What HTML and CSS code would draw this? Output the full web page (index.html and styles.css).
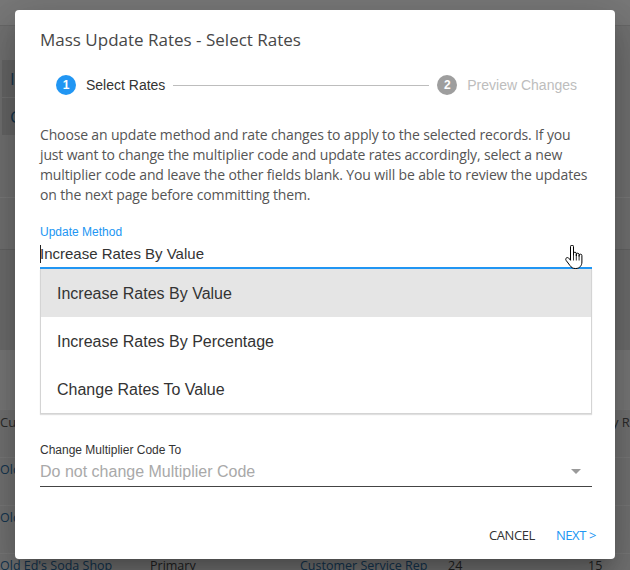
FILE: index.html
```html
<!DOCTYPE html>
<html>
<head>
<meta charset="utf-8">
<link rel="stylesheet" href="styles.css">
</head>
<body>
<div class="page">
  <div class="topbar"></div>
  <div class="toolbar">
    <div class="tool">Is</div>
    <div class="tool">C</div>
  </div>
  <div class="filters"></div>
  <div class="panel"></div>
  <div class="band"></div>
  <div class="table">
    <div class="trow thead"><span class="c1">Customer</span><span class="c2">Type</span><span class="c3">Role</span><span class="c4">Qty</span><span class="c5">Hourly Rate</span></div>
    <div class="trow"><span class="c1 link">Old Ed's Soda Shop</span><span class="c2">Primary</span><span class="c3 link">Customer Service Rep</span><span class="c4">24</span><span class="c5">15</span></div>
    <div class="trow"><span class="c1 link">Old Ed's Soda Shop</span><span class="c2">Primary</span><span class="c3 link">Customer Service Rep</span><span class="c4">24</span><span class="c5">15</span></div>
    <div class="trow"><span class="c1 link">Old Ed's Soda Shop</span><span class="c2">Primary</span><span class="c3 link">Customer Service Rep</span><span class="c4">24</span><span class="c5">15</span></div>
  </div>
</div>
<div class="backdrop"></div>
<div class="dialog">
  <h2 class="title">Mass Update Rates - Select Rates</h2>
  <div class="stepper">
    <div class="step active"><span class="step-icon">1</span><span class="step-label">Select Rates</span></div>
    <div class="connector"></div>
    <div class="step"><span class="step-icon">2</span><span class="step-label">Preview Changes</span></div>
  </div>
  <p class="intro">Choose an update method and rate changes to apply to the selected records. If you just want to change the multiplier code and update rates accordingly, select a new multiplier code and leave the other fields blank. You will be able to review the updates on the next page before committing them.</p>
  <div class="field">
    <label class="field-label focused">Update Method</label>
    <div class="input focused"><span class="caret"></span>Increase Rates By Value</div>
    <ul class="menu">
      <li class="menu-item selected">Increase Rates By Value</li>
      <li class="menu-item">Increase Rates By Percentage</li>
      <li class="menu-item">Change Rates To Value</li>
    </ul>
  </div>
  <div class="field field-2">
    <label class="field-label">Change Multiplier Code To</label>
    <div class="input select"><span class="placeholder">Do not change Multiplier Code</span><span class="arrow"></span></div>
  </div>
  <div class="actions">
    <button class="btn">CANCEL</button>
    <button class="btn primary">NEXT &gt;</button>
  </div>
</div>
<svg class="cursor" width="20" height="26" viewBox="0 0 20 26">
  <path d="M6.5 1.6a1.5 1.5 0 0 1 3 0V10.5V8.6a1.4 1.4 0 0 1 2.8 0V11V9.6a1.4 1.4 0 0 1 2.8 0V11.5V10.6a1.4 1.4 0 0 1 2.8 0V17c0 3.6-2.4 6.5-6 6.5H11.2c-2.4 0-3.9-1.1-5.2-2.9L2.1 15.4c-0.7-1-0.4-2.1 0.5-2.6 0.9-0.5 1.900-0.1 2.5 0.7L6.5 15.3Z" fill="#fff" stroke="#000" stroke-width="1" stroke-linejoin="round"/>
  <path d="M9.5 10.5V15.5M12.3 11V15.5M15.1 11.5V15.5" stroke="#000" stroke-width="0.8" fill="none"/>
</svg>
</body>
</html>
```

FILE: styles.css
```css
* { box-sizing: border-box; }
html, body { margin: 0; padding: 0; }
body {
  width: 630px;
  height: 570px;
  overflow: hidden;
  position: relative;
  font-family: "Open Sans", sans-serif;
}

/* underlying page */
.page {
  width: 630px;
  height: 570px;
  overflow: hidden;
  display: flex;
  flex-direction: column;
  background: #e2e2e2;
}
.topbar {
  height: 26px;
  flex: none;
  background: #f0f0f0;
  border-bottom: 1px solid #d0d0d0;
}
.toolbar {
  height: 171px;
  flex: none;
  padding: 34px 0 0 2px;
  display: flex;
  flex-direction: column;
  gap: 1px;
}
.tool {
  width: 80px;
  height: 37px;
  background: #cdcdcd;
  color: #2f6a9a;
  padding-left: 8px;
  line-height: 37px;
  font-size: 17px;
}
.filters {
  height: 53px;
  flex: none;
  border-top: 1px solid #f4f4f4;
  border-bottom: 1px solid #c8c8c8;
}
.panel {
  height: 100px;
  flex: none;
  background: #dadada;
}
.band {
  height: 59px;
  flex: none;
  background: #f0f0f0;
}
.table {
  flex: 1;
  background: #e4e4e4;
}
.trow {
  height: 48px;
  border-top: 1px solid #f2f2f2;
  display: grid;
  grid-template-columns: 150px 150px 148px 150px 32px;
  align-items: start;
  padding-top: 2px;
  font-size: 12.5px;
  line-height: 20px;
  color: #444;
  white-space: nowrap;
  overflow: hidden;
}
.thead { padding-top: 2px; color: #555; font-size: 13px; }
.trow .c5 { text-indent: -10px; }
.thead .c5 { text-indent: -20px; }
.link { color: #2a6aa0; }

.backdrop {
  position: absolute;
  inset: 0;
  background: rgba(0, 0, 0, 0.5);
}

/* dialog */
.dialog {
  position: absolute;
  left: 15px;
  top: 10px;
  width: 600px;
  height: 549px;
  background: #fff;
  border-radius: 4px;
  padding: 18px 23px 0 25px;
  box-shadow: 0 11px 15px -7px rgba(0,0,0,.2), 0 24px 38px 3px rgba(0,0,0,.14), 0 9px 46px 8px rgba(0,0,0,.12);
  display: flex;
  flex-direction: column;
}
.title {
  margin: 0;
  font-family: "Open Sans", sans-serif;
  font-weight: 400;
  font-size: 17px;
  line-height: 24px;
  color: #474747;
}
.stepper {
  margin: 23px 7px 0 8px;
  height: 20px;
  display: flex;
  align-items: center;
  font-family: "Liberation Sans", Arial, sans-serif;
  font-size: 14px;
}
.step {
  display: flex;
  align-items: center;
  padding: 0 8px;
  color: #bdbdbd;
}
.step.active { color: #333; }
.step-icon {
  width: 20px;
  height: 20px;
  border-radius: 50%;
  background: #9e9e9e;
  color: #fff;
  font-size: 12px;
  font-weight: bold;
  line-height: 20px;
  text-align: center;
  margin-right: 10px;
}
.step.active .step-icon { background: #2196f3; }
.step-label { line-height: 20px; }
.connector {
  flex: 1;
  height: 1px;
  background: #bdbdbd;
}
.intro {
  margin: 30px 0 0;
  font-size: 14px;
  line-height: 20px;
  letter-spacing: -0.15px;
  color: #555;
}
.field {
  margin-top: 20px;
  display: flex;
  flex-direction: column;
  font-family: "Liberation Sans", Arial, sans-serif;
}
.field-2 { margin-top: 29px; }
.field-label {
  font-size: 12px;
  line-height: 14px;
  color: #333;
}
.field-label.focused { color: #2196f3; }
.input {
  margin-top: 5px;
  font-size: 16px;
  line-height: 19px;
  color: #333;
  padding-bottom: 5px;
  border-bottom: 1px solid #444;
  display: flex;
  align-items: center;
}
.input.focused {
  font-size: 15px;
  padding-bottom: 4px;
  border-bottom: 2px solid #2196f3;
}
.caret {
  width: 1px;
  height: 18px;
  background: #222;
  margin-right: -1px;
}
.placeholder { color: #a9a9a9; flex: 1; }
.arrow {
  width: 0;
  height: 0;
  border-left: 5px solid transparent;
  border-right: 5px solid transparent;
  border-top: 5px solid #9a9a9a;
  margin-right: 11px;
}
.menu {
  list-style: none;
  margin: 0;
  padding: 0;
  border: 1px solid #d4d4d4;
  border-top: none;
  box-shadow: 0 1px 1px rgba(0,0,0,.12);
}
.menu-item {
  height: 48px;
  line-height: 49px;
  padding-left: 16px;
  font-size: 16px;
  color: #333;
}
.menu-item.selected { background: #e5e5e5; }
.actions {
  margin: 39px -4px 0 0;
  display: flex;
  justify-content: flex-end;
  gap: 21px;
}
.btn {
  border: none;
  background: none;
  padding: 0;
  font-family: "Open Sans", sans-serif;
  font-size: 13px;
  line-height: 18px;
  letter-spacing: -0.4px;
  color: #333;
}
.btn.primary { color: #2196f3; }

.cursor {
  position: absolute;
  left: 564px;
  top: 245px;
}
```
